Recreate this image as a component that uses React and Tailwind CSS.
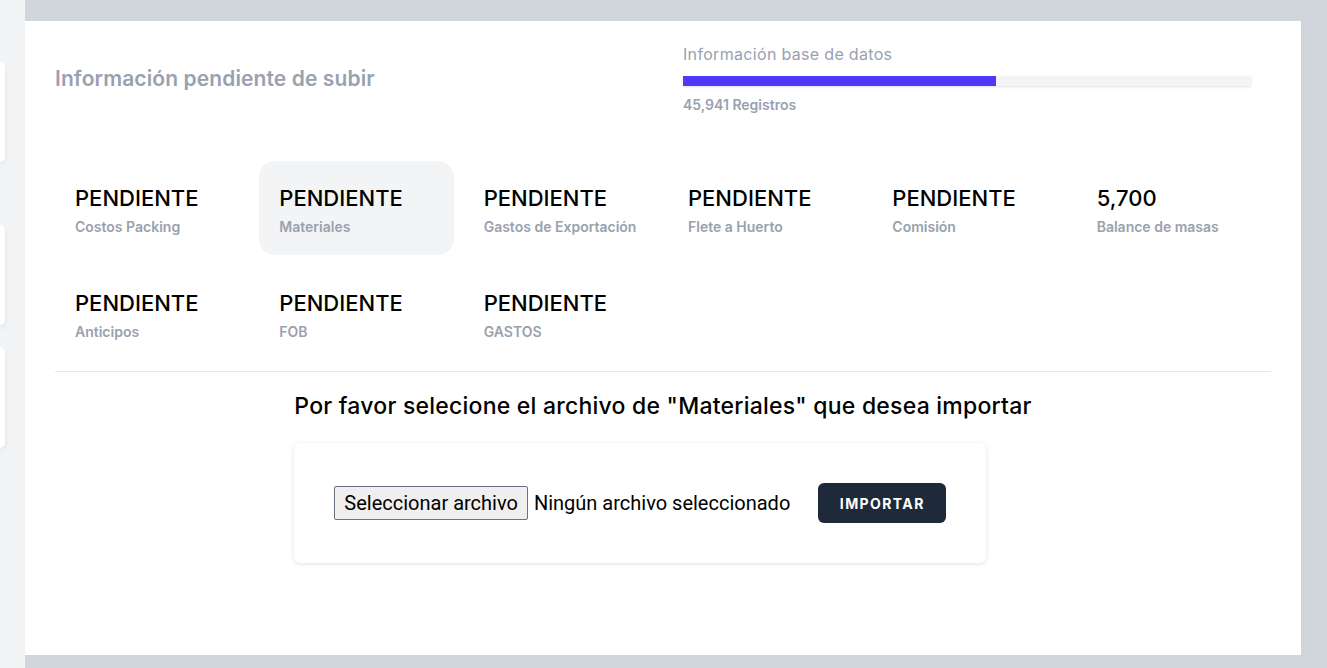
import React, { useState } from 'react';

const items = [
  { value: 'PENDIENTE', label: 'Costos Packing' },
  { value: 'PENDIENTE', label: 'Materiales' },
  { value: 'PENDIENTE', label: 'Gastos de Exportación' },
  { value: 'PENDIENTE', label: 'Flete a Huerto' },
  { value: 'PENDIENTE', label: 'Comisión' },
  { value: '5,700', label: 'Balance de masas' },
  { value: 'PENDIENTE', label: 'Anticipos' },
  { value: 'PENDIENTE', label: 'FOB' },
  { value: 'PENDIENTE', label: 'GASTOS' },
];

export default function App() {
  const [selected, setSelected] = useState('Materiales');

  return (
    <div className="flex h-[668px] w-[1327px] overflow-hidden font-['Inter',sans-serif]">
      {/* Sidebar (cut off) */}
      <div className="w-[25px] shrink-0 bg-gray-100 pt-[62px]">
        <div className="h-[100px] w-[5px] rounded-r-md bg-white shadow-md" />
        <div className="mt-[63px] h-[100px] w-[5px] rounded-r-md bg-white shadow-md" />
        <div className="mt-[22px] h-[101px] w-[5px] rounded-r-md bg-white shadow-md" />
      </div>

      {/* Main */}
      <div className="flex-1 bg-gray-300 pt-[21px] pr-[26px] pb-[13px]">
        <div className="h-full bg-white px-[30px] pt-[21px]">
          {/* Header */}
          <div className="grid grid-cols-2 items-center">
            <h2 className="text-[21px] font-semibold tracking-[0.005em] text-gray-400">Información pendiente de subir</h2>
            <div className="px-5">
              <p className="text-[16px] leading-6 tracking-[0.02em] text-gray-400">Información base de datos</p>
              <div className="mt-[10px] h-[10px] w-full bg-gray-100 shadow-sm">
                <div className="h-full bg-indigo-600" style={{ width: '55.1%' }} />
              </div>
              <p className="mt-[9px] text-[14px] font-semibold leading-5 text-gray-400">45,941 Registros</p>
            </div>
          </div>

          {/* Status grid */}
          <div className="mt-[46px] grid grid-cols-6 gap-x-[10px] gap-y-[11px]">
            {items.map((it) => (
              <div
                key={it.label}
                onClick={() => setSelected(it.label)}
                className={`cursor-pointer rounded-2xl px-5 pt-[23px] pb-[18px] ${
                  selected === it.label ? 'bg-gray-100' : ''
                }`}
              >
                <p className="text-[22px] font-medium leading-7 text-black">{it.value}</p>
                <p className="mt-[5px] text-[14px] font-semibold leading-5 text-gray-400">{it.label}</p>
              </div>
            ))}
          </div>

          <div className="mt-[11px] border-t border-gray-200" />

          {/* Import */}
          <div className="mx-auto mt-[20px] w-fit">
            <h3 className="text-[23px] font-medium leading-7 tracking-[0.01em] text-black">
              Por favor selecione el archivo de "{selected}" que desea importar
            </h3>
            <div className="mt-[23px] flex w-[692px] items-center rounded-md bg-white p-10 shadow-[0_1px_4px_rgba(0,0,0,0.12)]">
              <span className="flex h-[34px] items-center rounded-[2px] border border-gray-500 bg-[#efefef] px-[9px] text-[20px] text-black font-['Roboto',sans-serif]">
                Seleccionar archivo
              </span>
              <span className="ml-[6px] text-[20px] text-black font-['Roboto',sans-serif]">Ningún archivo seleccionado</span>
              <button className="ml-auto h-10 w-[128px] rounded-md bg-gray-800 text-[14px] font-bold tracking-widest text-white">
                IMPORTAR
              </button>
            </div>
          </div>
        </div>
      </div>
    </div>
  );
}
